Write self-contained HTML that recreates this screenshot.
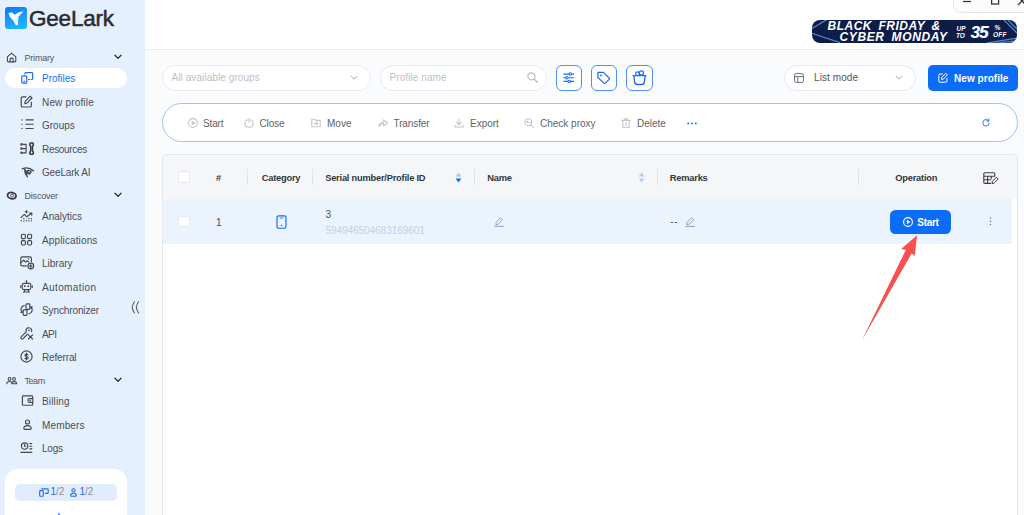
<!DOCTYPE html>
<html lang="en">
<head>
<meta charset="utf-8">
<title>GeeLark</title>
<style>
*{box-sizing:border-box;margin:0;padding:0}
html,body{width:1024px;height:515px;overflow:hidden}
body{font-family:"Liberation Sans",sans-serif;background:#fafbfd;color:#3a3f4a;position:relative;font-size:11px}
.abs{position:absolute}
svg{display:block;overflow:visible}
/* sidebar */
#side{left:0;top:0;width:144.7px;height:515px;background:#e5f0fe}
#logo{left:5px;top:7px;width:22px;height:22px;border-radius:3px;background:linear-gradient(160deg,#0a78f8 0%,#1ea0ff 60%,#19c2ff 100%)}
#brand{left:29px;top:6.4px;font-size:22.5px;font-weight:normal;-webkit-text-stroke:0.5px #2b2b2e;color:#2b2b2e;letter-spacing:-0.2px;line-height:26px;white-space:nowrap}
.hd{left:0;width:144px;height:14px}
.hd .t{position:absolute;left:24.5px;top:0.5px;letter-spacing:-0.2px;font-size:9px;line-height:14px;color:#54545c;white-space:nowrap}
.hd .i{position:absolute;left:5.6px;top:1.6px;width:11.2px;height:11.2px}
.hd .c{position:absolute;left:114.2px;top:4.3px;width:8px;height:6px}
.it{left:5px;width:122px;height:21px;border-radius:11px}
.it.on{background:#fff}
.it .t{position:absolute;left:37px;top:1px;font-size:10px;line-height:21px;color:#4c4c54;white-space:nowrap}
.it.on .t{color:#1a6cf5}
.it .i{position:absolute;left:15px;top:4px;width:13px;height:13px}
.ic{fill:none;stroke:#46464c;stroke-width:1.15;stroke-linecap:round;stroke-linejoin:round}
.icb{fill:none;stroke:#1a6cf5;stroke-width:1.2;stroke-linecap:round;stroke-linejoin:round}
#card{left:5px;top:469px;width:122px;height:60px;background:#fff;border-radius:13px}
#quota{left:15px;top:483.5px;width:102px;height:17px;border-radius:5px;background:#e1edfd}

/* main */
#top{left:144.7px;top:0;width:880px;height:49.5px;background:#fff;border-bottom:1px solid #eaebee}
#win{left:953px;top:-10px;width:90px;height:22.5px;border:1px solid #e4e6ea;border-radius:0 0 0 8px;background:#fcfcfd}
#banner{left:812px;top:20px;width:204.9px;height:22.8px;border-radius:8px;background:#0d1b40 repeating-linear-gradient(90deg,rgba(80,120,210,.07) 0,rgba(80,120,210,.07) 1px,transparent 1px,transparent 2px);overflow:hidden;color:#fff;font-weight:bold;font-style:italic;white-space:nowrap}
#banner span{position:absolute;line-height:1}
.pill{height:26px;border:1px solid #e8eaef;border-radius:13px;background:#fff;margin-top:-0.5px}
.ph{position:absolute;top:0.5px;letter-spacing:0.08px;font-size:10px;line-height:24px;color:#bcc0c9;white-space:nowrap}
.sq{width:26.5px;height:26px;top:64.5px;border:1px solid #4a92f9;border-radius:6px;background:#fff}
#newp{left:928px;top:65px;width:89.5px;height:26px;border-radius:5px;background:#0b6cf8;color:#fff;font-weight:bold;font-size:10px;letter-spacing:-0.1px;line-height:26px;white-space:nowrap}
#bar{left:162px;top:102.7px;width:855.5px;height:39px;border:1px solid #9cc3fa;border-radius:20px;background:#fff}
.tb{top:1.5px;font-size:10px;line-height:37px;color:#5e6268;white-space:nowrap}
.tbi{top:14.3px;margin-left:-0.8px;width:10px;height:10px}
.g{fill:none;stroke:#c3c5ca;stroke-width:1.1;stroke-linecap:round;stroke-linejoin:round}
#tbl{left:162px;top:154px;width:855.5px;height:380px;border:1px solid #e6e8ed;border-radius:4px 4px 0 0;background:#fff;overflow:hidden}
#th{left:0;top:0;width:855px;height:44px;background:#f5f6f8}
#tr{left:0;top:44px;width:849.3px;height:45px;background:#ebf3fe}
#gut{left:849.3px;top:44px;width:5px;height:400px;background:#fff}
.h{top:1px;font-size:9.3px;letter-spacing:-0.22px;font-weight:bold;line-height:44px;color:#33363d;white-space:nowrap}
.sep{top:14px;width:1px;height:16px;background:#e1e4e9}
.cb{width:11.5px;height:11.5px;border:1px solid #e6e9ef;border-radius:2.5px;background:#fff;left:15px}
.td{font-size:10px;color:#4a4f5a;white-space:nowrap;line-height:14px}
#start{left:727.3px;top:55px;width:60.4px;height:23.5px;border-radius:5.5px;background:#0b6cf8;color:#fff;font-weight:bold;font-size:10px;letter-spacing:-0.3px;line-height:23.5px;white-space:nowrap}
.q{top:-0.5px;font-size:10px;line-height:17.5px;color:#8a8f9a;white-space:nowrap;letter-spacing:-0.1px}
.q b{font-weight:normal;color:#1a6cf5}
</style>
</head>
<body>
<div id="side" class="abs"></div>
<div id="logo" class="abs"><svg width="22" height="22" viewBox="0 0 22 22"><path d="M3.2 6.6 L5.1 5.4 L7 5.6 L9.6 7.7 L14 5.2 L18.7 4.3 L15 8 L13.3 9.9 L12.9 18.6 L10.2 17.5 L8.2 13.6 L4.7 9.7 L4.2 7.8 Z" fill="#fff"/><path d="M9.6 7.7 L13.3 9.9 L12.9 18.6 L10.6 12.4 Z" fill="#e3f1ff"/></svg></div>
<div id="brand" class="abs">GeeLark</div>


<!-- section headers -->
<div class="abs hd" style="top:50px"><svg class="i" viewBox="0 0 12 12"><path class="ic" d="M1.5 5.2 L6 1.3 L10.5 5.2 V9.6 Q10.5 10.6 9.5 10.6 H2.5 Q1.5 10.6 1.5 9.6 Z"/><path class="ic" d="M4.4 10.4 V7.6 Q4.4 6.6 6 6.6 Q7.6 6.6 7.6 7.6 V10.4"/></svg><span class="t">Primary</span><svg class="c" viewBox="0 0 8 6"><path d="M1 1.2 L4 4.4 L7 1.2" fill="none" stroke="#2e2e34" stroke-width="1.3" stroke-linecap="round" stroke-linejoin="round"/></svg></div>
<div class="abs hd" style="top:188px"><svg class="i" viewBox="0 0 12 12"><g transform="rotate(12 6.2 6)"><ellipse cx="6.2" cy="6" rx="4.6" ry="3.3" fill="none" stroke="#36363c" stroke-width="1.9"/><circle cx="6.4" cy="6" r="1.5" fill="none" stroke="#46464c" stroke-width="0.9"/></g></svg><span class="t">Discover</span><svg class="c" viewBox="0 0 8 6"><path d="M1 1.2 L4 4.4 L7 1.2" fill="none" stroke="#2e2e34" stroke-width="1.3" stroke-linecap="round" stroke-linejoin="round"/></svg></div>
<div class="abs hd" style="top:373px"><svg class="i" viewBox="0 0 12 12"><circle class="ic" cx="3.8" cy="4.2" r="1.5"/><circle class="ic" cx="8.6" cy="4.2" r="1.5"/><path class="ic" d="M0.8 9.4 Q0.8 7 3.8 7 Q6 7 6.4 8.4"/><path class="ic" d="M6.2 9.4 Q6.2 7 8.8 7 Q11.4 7 11.4 9.4 Z"/></svg><span class="t" style="letter-spacing:-0.45px">Team</span><svg class="c" viewBox="0 0 8 6"><path d="M1 1.2 L4 4.4 L7 1.2" fill="none" stroke="#2e2e34" stroke-width="1.3" stroke-linecap="round" stroke-linejoin="round"/></svg></div>

<!-- Primary -->
<div class="abs it on" style="top:67.5px;height:20.5px"><svg class="i" style="top:3.5px" viewBox="0 0 13 13"><rect class="icb" x="1.8" y="4.8" width="5" height="7.4" rx="1"/><path class="icb" d="M4.8 3 V2.6 Q4.8 1.7 5.7 1.7 H11.8 Q12.7 1.7 12.7 2.6 V7.6 Q12.7 8.5 11.8 8.5 H11.4"/><path class="icb" d="M8.6 8.5 H9.8"/><path class="icb" d="M4 10.4 H4.6"/></svg><span class="t" style="top:0">Profiles</span></div>
<div class="abs it" style="top:90.5px"><svg class="i" viewBox="0 0 13 13"><path class="ic" d="M6 1.8 H2.8 Q1.2 1.8 1.2 3.4 V10.4 Q1.2 12 2.8 12 H9.8 Q11.4 12 11.4 10.4 V7.2"/><path class="ic" d="M10.2 1.2 L12 3 L6.8 8.2 L4.8 8.6 L5.2 6.4 Z"/></svg><span class="t" style="letter-spacing:0.17px">New profile</span></div>
<div class="abs it" style="top:114px"><svg class="i" viewBox="0 0 13 13"><path class="ic" d="M6 1.9 H13.2 M6 6.2 H13.2 M6 10.5 H13.2"/><path class="ic" d="M1.8 1.9 H2.2 M1.8 6.2 H2.2 M1.8 10.5 H2.2" stroke="#7a7a82"/></svg><span class="t">Groups</span></div>
<div class="abs it" style="top:137.5px"><svg class="i" viewBox="0 0 13 13"><path class="ic" d="M2.4 2.4 H6.1 V10.8 H2.4 M2.4 6.6 H6.1"/><circle cx="1.5" cy="2.4" r="1.35" fill="#5a5a62"/><circle cx="1.5" cy="6.6" r="1.35" fill="#5a5a62"/><circle cx="1.5" cy="10.8" r="1.35" fill="#5a5a62"/><path d="M10.4 0.9 Q9 2.6 10.7 4.2 V9 Q9 10.6 10.4 12.3 H12.8 Q14.2 10.6 12.5 9 V4.2 Q14.2 2.6 12.8 0.9 Z" fill="none" stroke="#3a3a40" stroke-width="1.5" stroke-linejoin="round"/></svg><span class="t" style="letter-spacing:-0.32px">Resources</span></div>
<div class="abs it" style="top:161px"><svg class="i" viewBox="0 0 13 13"><path d="M2.3 3.9 Q8 1.2 13.5 5.8" fill="none" stroke="#46464c" stroke-width="1.3" stroke-linecap="round"/><path d="M4.4 3.6 Q4.2 9.6 7.6 12.3 Q6.4 9.4 6.8 6.6 Z" fill="#46464c" stroke="#46464c" stroke-width="0.8" stroke-linejoin="round"/><circle cx="8.7" cy="7.1" r="2.3" fill="#46464c"/><circle cx="9.1" cy="6.8" r="0.8" fill="#e5f0fe"/><path d="M11.4 5.4 Q11.8 8.2 9.4 9.6" fill="none" stroke="#46464c" stroke-width="0.9" stroke-linecap="round"/></svg><span class="t" style="letter-spacing:-0.17px">GeeLark AI</span></div>

<!-- Discover -->
<div class="abs it" style="top:205px"><svg class="i" viewBox="0 0 13 13"><path class="ic" d="M1 8.6 L4.4 5.4 L6.8 7.8 L11.6 4.2 M9.6 4 H11.8 V6.2"/><path class="ic" d="M1.2 11.8 H1.6 M3.7 11.8 H4.1 M6.2 11.8 H6.6 M8.7 11.8 H9.1 M11.2 11.8 H11.6 M3.7 9.6 H4.1 M8.7 9.6 H9.1 M11.2 9.6 H11.6" /><path d="M6.4 0.6 L7 2.2 L8.6 2.8 L7 3.4 L6.4 5 L5.8 3.4 L4.2 2.8 L5.8 2.2 Z" fill="#3c3c42"/></svg><span class="t">Analytics</span></div>
<div class="abs it" style="top:228.5px"><svg class="i" viewBox="0 0 13 13"><rect class="ic" x="1.4" y="1.2" width="4" height="4.4" rx="1.2"/><rect class="ic" x="7.6" y="1.2" width="4" height="4.4" rx="1.2"/><rect class="ic" x="1.4" y="7.6" width="4" height="4.4" rx="1.2"/><rect class="ic" x="7.6" y="7.6" width="4" height="4.4" rx="1.2"/></svg><span class="t" style="letter-spacing:0.13px">Applications</span></div>
<div class="abs it" style="top:252px"><svg class="i" viewBox="0 0 13 13"><path class="ic" d="M6.4 9.8 H2.2 Q0.8 9.8 0.8 8.4 V2.2 Q0.8 0.8 2.2 0.8 H10 Q11.4 0.8 11.4 2.2 V5.6"/><path class="ic" d="M1 6.6 L3.6 4.2 L5.6 6 L7.2 4.8 L8.6 5.8" stroke-width="1"/><circle cx="8.6" cy="3" r="0.7" fill="#46464c"/><circle class="ic" cx="10.8" cy="10" r="2.9" stroke-width="1"/><path class="ic" d="M10.8 8.6 V11.4 M9.4 10 H12.2" stroke-width="0.9"/></svg><span class="t">Library</span></div>
<div class="abs it" style="top:275.5px"><svg class="i" viewBox="0 0 13 13"><rect class="ic" x="2.2" y="3.4" width="8.6" height="6.2" rx="1.8"/><path class="ic" d="M6.5 3.2 V1.2 M0.8 5.6 V7.6 M12.2 5.6 V7.6 M3.4 12 H9.6 M4.8 9.8 L4.2 12 M8.2 9.8 L8.8 12"/><circle cx="4.8" cy="6.2" r="0.9" fill="#3c3c42"/><circle cx="8.2" cy="6.2" r="0.9" fill="#3c3c42"/><circle cx="6.5" cy="1" r="0.8" fill="#3c3c42"/></svg><span class="t" style="letter-spacing:0.38px">Automation</span></div>
<div class="abs it" style="top:299px"><svg class="i" viewBox="0 0 13 13"><rect class="ic" x="6" y="0.8" width="3.8" height="5.6" rx="0.8"/><rect class="ic" x="3.2" y="6.8" width="3.8" height="5.6" rx="0.8"/><path class="ic" d="M4.2 2.6 Q0.8 3.4 1 6.8 Q1.2 8.4 2 9.2 M1 9.4 H2.2 V8.2"/><path class="ic" d="M9 10.8 Q12.2 10 12.2 6.6 Q12 5 11 4 M12.2 3.8 H10.8 V5.2"/></svg><span class="t" style="letter-spacing:-0.11px">Synchronizer</span></div>
<div class="abs it" style="top:322.5px"><svg class="i" viewBox="0 0 13 13"><path class="ic" d="M6.3 4.6 Q5.4 2 7.6 0.9 Q10 0.2 11.4 2.2 Q12 3.4 11.6 4.6 M6.3 4.6 L1.2 9.9 Q0.4 11 1.3 11.9 Q2.3 12.6 3.2 11.7 L7.6 7"/><circle cx="9" cy="3.4" r="0.8" fill="#46464c"/><path class="ic" d="M8.4 7.8 L12.6 12 M12.6 7.8 L8.4 12" stroke-width="1.5"/></svg><span class="t" style="letter-spacing:-0.57px">API</span></div>
<div class="abs it" style="top:346px"><svg class="i" viewBox="0 0 13 13"><circle class="ic" cx="6.5" cy="6.5" r="5.6"/><path class="ic" d="M8 4.8 Q7.8 4 6.5 4 Q5 4 5 5.2 Q5 6.2 6.5 6.5 Q8.1 6.8 8.1 7.9 Q8.1 9 6.5 9 Q5.1 9 4.9 8.2 M6.5 3.2 V9.8" stroke-width="1.3"/></svg><span class="t" style="letter-spacing:-0.15px">Referral</span></div>

<!-- Team -->
<div class="abs it" style="top:390px"><svg class="i" style="left:15.8px" viewBox="0 0 13 13"><path class="ic" d="M11.6 4.4 V2.6 Q11.6 1.8 10.8 1.8 H2.2 Q1.4 1.8 1.4 2.6 V10.4 Q1.4 11.2 2.2 11.2 H10.8 Q11.6 11.2 11.6 10.4 V8.6"/><path class="ic" d="M11.8 4.6 H8.4 Q7 4.6 7 6.5 Q7 8.4 8.4 8.4 H11.8 Z"/><circle cx="9.2" cy="6.5" r="0.8" fill="#3c3c42"/></svg><span class="t" style="letter-spacing:0.16px">Billing</span></div>
<div class="abs it" style="top:413.5px"><svg class="i" style="left:15.8px" viewBox="0 0 13 13"><circle class="ic" cx="6.5" cy="4" r="2"/><path class="ic" d="M2.8 10.6 Q2.8 7.6 6.5 7.6 Q10.2 7.6 10.2 10.6 Q10.2 11.4 9.4 11.4 H3.6 Q2.8 11.4 2.8 10.6 Z"/></svg><span class="t" style="letter-spacing:0.14px">Members</span></div>
<div class="abs it" style="top:437px"><svg class="i" viewBox="0 0 13 13"><circle class="ic" cx="4.6" cy="5" r="3.2"/><path class="ic" d="M4.6 3.4 V5.2 H5.8 M9.8 2.6 H11.8 M9.8 5.2 H11.8 M9.8 7.8 H11.8 M1 11.4 H11.8" /></svg><span class="t" style="letter-spacing:-0.19px">Logs</span></div>

<!-- collapse -->
<svg class="abs" style="left:131px;top:301px" width="9" height="13" viewBox="0 0 9 13"><path d="M3.4 0.8 Q1.6 3.6 1.2 6.4 Q1.6 9.2 3.4 12 M7.5 0.8 Q5.7 3.6 5.3 6.4 Q5.7 9.2 7.5 12" fill="none" stroke="#5c5c64" stroke-width="1.1" stroke-linecap="round" stroke-linejoin="round"/></svg>

<div id="card" class="abs"></div>
<div id="quota" class="abs">
 <svg class="abs" style="left:24px;top:4px" width="10" height="9" viewBox="0 0 10 9"><rect x="0.7" y="2.6" width="3.6" height="5.6" rx="0.7" fill="none" stroke="#1a6cf5" stroke-width="1.1"/><path d="M2.8 0.9 H8.4 Q9.2 0.9 9.2 1.7 V4.6 Q9.2 5.4 8.4 5.4 H6.4" fill="none" stroke="#1a6cf5" stroke-width="1.1" stroke-linecap="round"/></svg>
 <span class="abs q" style="left:35.5px"><b>1</b>/2</span>
 <svg class="abs" style="left:55px;top:4px" width="7" height="9" viewBox="0 0 7 9"><circle cx="3.5" cy="2.4" r="1.6" fill="none" stroke="#1a6cf5" stroke-width="1.1"/><path d="M0.7 7.4 Q0.7 5.2 3.5 5.2 Q6.3 5.2 6.3 7.4 Q6.3 8.2 5.5 8.2 H1.5 Q0.7 8.2 0.7 7.4 Z" fill="none" stroke="#1a6cf5" stroke-width="1.1"/></svg>
 <span class="abs q" style="left:64.5px"><b>1</b>/2</span>
</div>
<div class="abs" style="left:58px;top:513px;width:2px;height:3px;background:#5a8ff5;border-radius:1px"></div>

<div id="top" class="abs"></div>
<div id="win" class="abs">
 <svg class="abs" style="left:9px;top:7.1px" width="70" height="10" viewBox="0 0 70 10"><path d="M0 3.5 H8" stroke="#333" stroke-width="1.25"/><rect x="28.6" y="-2" width="7" height="8" fill="none" stroke="#333" stroke-width="1.25"/><path d="M55 -1 L63 7 M63 -1 L55 7" stroke="#333" stroke-width="1.25"/></svg>
</div>
<div id="banner" class="abs">
 <svg class="abs" style="left:0;top:0" width="206" height="23" viewBox="0 0 206 23"><path d="M-1 9 L15 -0.5 M-1 13 L28 22.6 M191 -1 L206 14 M195 -1 L206 10 M175 23 L206 18 M183 23.4 L206 20.5" stroke="#6a9cf0" stroke-width="1.3" opacity=".8"/></svg>
 <span style="left:15.5px;top:0px;font-size:12px;letter-spacing:.5px;word-spacing:2.6px">BLACK FRIDAY &amp;</span>
 <span style="left:27.5px;top:11px;font-size:12px;letter-spacing:.62px;word-spacing:3px">CYBER MONDAY</span>
 <span style="left:144.5px;top:5.7px;font-size:6.5px">UP</span>
 <span style="left:144px;top:12.5px;font-size:6.5px">TO</span>
 <span style="left:158.5px;top:3.5px;font-size:17px;letter-spacing:-0.9px;text-shadow:.9px .3px 0 #2a6ae0">35</span>
 <span style="left:182.5px;top:4.5px;font-size:6.5px">%</span>
 <span style="left:181px;top:11.7px;font-size:6.5px;letter-spacing:.2px">OFF</span>
</div>

<!-- filter row -->
<div class="abs pill" style="left:162px;top:65px;width:209px"><span class="ph" style="left:8.5px">All available groups</span><svg class="abs" style="left:187px;top:9px" width="8" height="6" viewBox="0 0 8 6"><path d="M1 1.2 L4 4.2 L7 1.2" fill="none" stroke="#a3a8b2" stroke-width="1" stroke-linecap="round" stroke-linejoin="round"/></svg></div>
<div class="abs pill" style="left:380px;top:65px;width:167px"><span class="ph" style="left:8.5px">Profile name</span><svg class="abs" style="left:145.5px;top:6.6px" width="11" height="11" viewBox="0 0 10 10"><circle cx="4" cy="4" r="3.2" fill="none" stroke="#b6bac2" stroke-width="1.1"/><path d="M6.4 6.4 L9.4 9.4" stroke="#b6bac2" stroke-width="1.2" stroke-linecap="round"/></svg></div>
<div class="abs sq" style="left:555.6px"><svg class="abs" style="left:6.8px;top:6.6px" width="11.5" height="11.5" viewBox="0 0 11 11"><path d="M0.8 2 H10.2 M0.8 5.5 H10.2 M0.8 9 H10.2" stroke="#1a6cf5" stroke-width="1.1" stroke-linecap="round"/><circle cx="7" cy="2" r="1.2" fill="#fff" stroke="#1a6cf5" stroke-width="1"/><circle cx="3.6" cy="5.5" r="1.2" fill="#fff" stroke="#1a6cf5" stroke-width="1"/><circle cx="6" cy="9" r="1.2" fill="#fff" stroke="#1a6cf5" stroke-width="1"/></svg></div>
<div class="abs sq" style="left:590.9px"><svg class="abs" style="left:4.6px;top:5.2px" width="15" height="14" viewBox="0 0 12 12"><path d="M1.2 1.8 Q1.2 1.2 1.8 1.2 H6 L11 6.2 Q11.4 6.6 11 7 L7.4 10.6 Q7 11 6.6 10.6 L1.2 5.6 Z" fill="none" stroke="#1a6cf5" stroke-width="1.1" stroke-linejoin="round"/><circle cx="3.8" cy="3.8" r="0.8" fill="#1a6cf5"/></svg></div>
<div class="abs sq" style="left:626.1px"><svg class="abs" style="left:4.8px;top:4.2px" width="15" height="16" viewBox="0 0 12 13"><path d="M1.4 4.6 H10.6 L10 9.6 Q9.7 11.8 7.6 11.8 H4.4 Q2.3 11.8 2 9.6 Z M0.8 4.6 H11.2" fill="none" stroke="#1a6cf5" stroke-width="1.1" stroke-linejoin="round" stroke-linecap="round"/><circle cx="4.4" cy="3" r="1.5" fill="#fff" stroke="#1a6cf5" stroke-width="1"/><circle cx="7.6" cy="2.4" r="1.7" fill="#fff" stroke="#1a6cf5" stroke-width="1"/></svg></div>
<div class="abs pill" style="left:784px;top:65px;width:132px"><svg class="abs" style="left:9px;top:7px" width="10" height="10" viewBox="0 0 10 10"><rect x="0.6" y="0.6" width="8.8" height="8.8" rx="1.6" fill="none" stroke="#6b7280" stroke-width="1"/><path d="M0.6 3.6 H9.4 M3.8 3.6 V9.4" stroke="#6b7280" stroke-width="1"/></svg><span class="ph" style="left:29px;color:#50545c">List mode</span><svg class="abs" style="left:110px;top:9px" width="8" height="6" viewBox="0 0 8 6"><path d="M1 1.2 L4 4.2 L7 1.2" fill="none" stroke="#a3a8b2" stroke-width="1" stroke-linecap="round" stroke-linejoin="round"/></svg></div>
<div id="newp" class="abs"><svg class="abs" style="left:10px;top:8px" width="10" height="10" viewBox="0 0 10 10"><path d="M4.6 1 H2 Q0.8 1 0.8 2.2 V8 Q0.8 9.2 2 9.2 H7.8 Q9 9.2 9 8 V5.4 M8 0.6 L9.4 2 L5.2 6.2 L3.6 6.4 L3.8 4.8 Z" fill="none" stroke="#fff" stroke-width="1" stroke-linejoin="round" stroke-linecap="round"/></svg><span class="abs" style="left:26px;top:1.3px;letter-spacing:0.05px">New profile</span></div>

<!-- toolbar -->
<div id="bar" class="abs">
 <svg class="abs tbi" style="left:26px" viewBox="0 0 10 10"><circle class="g" cx="5" cy="5" r="4.4"/><path d="M3.6 2.5 L7.6 5 L3.6 7.5 Z" fill="#c4c7cd"/></svg><span class="abs tb" style="letter-spacing:-0.15px;left:40px">Start</span>
 <svg class="abs tbi" style="left:82px" viewBox="0 0 10 10"><path class="g" d="M3.2 1.8 Q0.8 3 0.8 5.4 Q0.8 9.2 5 9.2 Q9.2 9.2 9.2 5.4 Q9.2 3 6.8 1.8 M5 0.6 V4.2"/></svg><span class="abs tb" style="letter-spacing:-0.15px;left:96.5px">Close</span>
 <svg class="abs tbi" style="left:149px" viewBox="0 0 10 10"><path class="g" d="M0.8 1.2 H3.8 L4.8 2.4 H9.2 V8.8 H0.8 Z M3.2 5.6 H6.8 M5.6 4.4 L6.8 5.6 L5.6 6.8"/></svg><span class="abs tb" style="left:164px">Move</span>
 <svg class="abs tbi" style="left:215.5px" viewBox="0 0 10 10"><path class="g" d="M0.8 8.6 Q1.4 4.2 5.6 4.2 V1.8 L9.4 5 L5.6 8 V5.8 Q2.6 5.8 0.8 8.6 Z"/></svg><span class="abs tb" style="letter-spacing:-0.10px;left:230.5px">Transfer</span>
 <svg class="abs tbi" style="left:292px" viewBox="0 0 10 10"><path class="g" d="M5 0.8 V6.4 M2.6 4.2 L5 6.6 L7.4 4.2 M0.8 7.2 V9 H9.2 V7.2"/></svg><span class="abs tb" style="left:307px">Export</span>
 <svg class="abs tbi" style="left:362px" viewBox="0 0 10 10"><circle class="g" cx="4.2" cy="4.2" r="3.4"/><path class="g" d="M6.8 6.8 L9.4 9.4 M2.6 4.2 H5.8 M2.6 4.2 L3.6 3.2"/></svg><span class="abs tb" style="left:377px">Check proxy</span>
 <svg class="abs tbi" style="left:459px" viewBox="0 0 10 10"><path class="g" d="M0.8 2.4 H9.2 M3.6 2.2 V0.8 H6.4 V2.2 M1.8 2.4 V9.2 H8.2 V2.4 M5 4.4 V7.2"/></svg><span class="abs tb" style="left:474px">Delete</span>
 <svg class="abs" style="left:524px;top:18px" width="10" height="3" viewBox="0 0 10 3"><circle cx="1.2" cy="1.5" r="0.9" fill="#1a6cf5"/><circle cx="5" cy="1.5" r="0.9" fill="#1a6cf5"/><circle cx="8.8" cy="1.5" r="0.9" fill="#1a6cf5"/></svg>
 <svg class="abs" style="left:819px;top:14px" width="8" height="9" viewBox="0 0 9 10"><path d="M7.6 3.2 Q6.4 1.6 4.5 1.6 Q1 1.8 0.9 5.4 Q1 9 4.5 9.2 Q8 9 8.1 5.6 M7.8 0.8 V3.4 H5.2" fill="none" stroke="#1a6cf5" stroke-width="1" stroke-linecap="round" stroke-linejoin="round"/></svg>
</div>

<!-- table -->
<div id="tbl" class="abs">
 <div id="th" class="abs"></div>
 <div id="tr" class="abs"></div>
 <div id="gut" class="abs"></div>
 <div class="abs cb" style="top:16px"></div>
 <span class="abs h" style="left:53px">#</span>
 <div class="abs sep" style="left:84.2px"></div>
 <span class="abs h" style="left:98.7px">Category</span>
 <div class="abs sep" style="left:149px"></div>
 <span class="abs h" style="left:162.2px">Serial number/Profile ID</span>
 <svg class="abs" style="left:292.2px;top:17px" width="7" height="11" viewBox="0 0 7 11"><path d="M3.5 0.6 L6.4 4.4 H0.6 Z" fill="#a9c6f5"/><path d="M3.5 10.4 L6.4 6.6 H0.6 Z" fill="#0b6cf8"/></svg>
 <div class="abs sep" style="left:311.2px"></div>
 <span class="abs h" style="left:324.2px">Name</span>
 <svg class="abs" style="left:475.3px;top:17px" width="7" height="11" viewBox="0 0 7 11"><path d="M3.5 0.6 L6.4 4.4 H0.6 Z" fill="#b7cdf1"/><path d="M3.5 10.4 L6.4 6.6 H0.6 Z" fill="#b7cdf1"/></svg>
 <div class="abs sep" style="left:494.3px"></div>
 <span class="abs h" style="left:506.8px">Remarks</span>
 <div class="abs sep" style="left:695.3px"></div>
 <span class="abs h" style="left:732.3px">Operation</span>
 <svg class="abs" style="left:820.3px;top:16.5px" width="16" height="13" viewBox="0 0 16 13"><path d="M8 11.4 H2 Q0.8 11.4 0.8 10.2 V2 Q0.8 0.8 2 0.8 H10.6 Q11.8 0.8 11.8 2 V4.6 M0.8 4.2 H11.8 M0.8 7.8 H8 M4.6 4.2 V11.4 M8.2 4.2 V7" fill="none" stroke="#3c3c42" stroke-width="1.1" stroke-linejoin="round"/><path d="M13.4 5.2 L15.2 7 L11 11.2 L9 11.6 L9.4 9.4 Z" fill="none" stroke="#3c3c42" stroke-width="1" stroke-linejoin="round"/></svg>

 <div class="abs cb" style="top:60.5px"></div>
 <span class="abs td" style="left:53px;top:60.6px">1</span>
 <svg class="abs" style="left:112.7px;top:60px" width="11" height="14" viewBox="0 0 11 14"><rect x="1" y="0.8" width="9" height="12.4" rx="1.6" fill="none" stroke="#0b6cf8" stroke-width="1.15"/><path d="M4.2 3 H6.8" stroke="#0b6cf8" stroke-width="0.9" stroke-linecap="round"/><circle cx="5.5" cy="10.6" r="0.75" fill="#0b6cf8"/></svg>
 <span class="abs td" style="left:162.4px;top:52.7px">3</span>
 <span class="abs td" style="left:162.4px;top:69px;color:#c3d0e6;letter-spacing:-0.04px">594946504683169601</span>
 <svg class="abs" style="left:331.2px;top:62px" width="10" height="10" viewBox="0 0 10 10"><path d="M6.8 1 L8.6 2.8 L3.8 7.4 L1.8 7.6 L2.2 5.6 Z M0.6 9.4 H9.4" fill="none" stroke="#8795bb" stroke-width="0.9" stroke-linejoin="round" stroke-linecap="round"/></svg>
 <span class="abs td" style="left:507.3px;top:60px;letter-spacing:0.7px">--</span>
 <svg class="abs" style="left:522.3px;top:62px" width="10" height="10" viewBox="0 0 10 10"><path d="M6.8 1 L8.6 2.8 L3.8 7.4 L1.8 7.6 L2.2 5.6 Z M0.6 9.4 H9.4" fill="none" stroke="#8795bb" stroke-width="0.9" stroke-linejoin="round" stroke-linecap="round"/></svg>
 <div id="start" class="abs"><svg class="abs" style="left:13px;top:7px" width="10" height="10" viewBox="0 0 10 10"><circle cx="5" cy="5" r="4.4" fill="none" stroke="#fff" stroke-width="1.1"/><path d="M3.8 2.7 L7.3 5 L3.8 7.3 Z" fill="#fff"/></svg><span class="abs" style="left:27px;top:1px">Start</span></div>
 <svg class="abs" style="left:825.9px;top:62.3px" width="3" height="9" viewBox="0 0 3 9"><circle cx="1.5" cy="1" r="0.75" fill="#6b7280"/><circle cx="1.5" cy="4.3" r="0.75" fill="#6b7280"/><circle cx="1.5" cy="7.6" r="0.75" fill="#6b7280"/></svg>
</div>

<!-- red arrow -->
<svg class="abs" style="left:0;top:0" width="1024" height="515" viewBox="0 0 1024 515"><path d="M917.1 235.2 L914.7 255.7 L911.6 253.5 L861.6 341 L905.8 249.9 L901.2 248.9 Z" fill="#f84f50"/></svg>
</body>
</html>
